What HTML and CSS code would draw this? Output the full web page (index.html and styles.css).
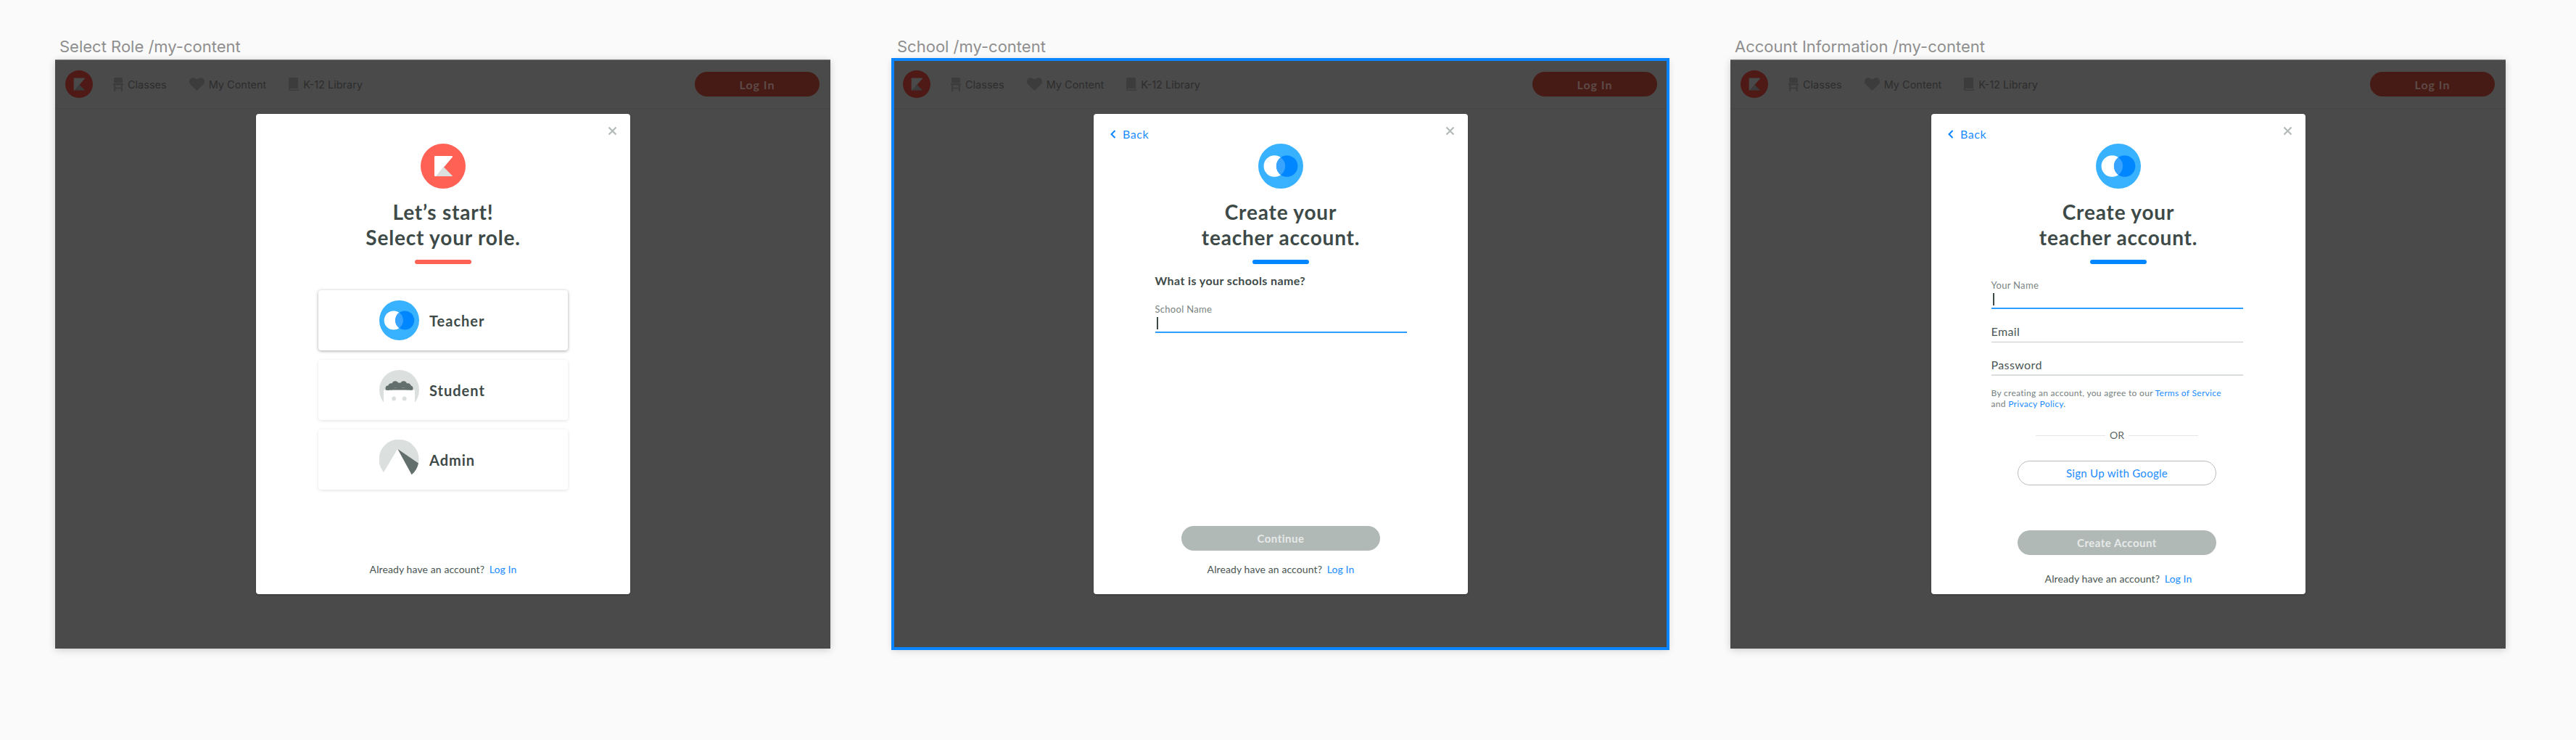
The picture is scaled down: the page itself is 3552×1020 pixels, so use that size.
FILE: index.html
```html
<!DOCTYPE html>
<html lang="en">
<head>
    <meta charset="UTF-8">
    <title>Sign up flow - /my-content</title>
    <link rel="stylesheet" href="styles.css">
</head>
<body>
    <!-- shared icons -->
    <svg class="defs" width="0" height="0">
        <symbol id="logo" viewBox="0 0 62 62">
            <circle cx="31" cy="31" r="31" style="fill: var(--logo-bg)"/>
            <path d="M20 18H43L31.700 31.300L21 44H20Z" style="fill: var(--logo-k); stroke: var(--logo-k)" stroke-width="2" stroke-linejoin="round"/>
            <path d="M22 44.500L31.700 32.500L43.500 44.500Z" style="fill: var(--logo-tri); stroke: var(--logo-tri)" stroke-width="1" stroke-linejoin="round"/>
        </symbol>
        <symbol id="teacher" viewBox="0 0 60 60">
            <circle cx="30" cy="30" r="30" fill="#38b2ff"/>
            <circle cx="21.600" cy="30" r="14.300" fill="#fff"/>
            <circle cx="38.400" cy="30" r="14.200" fill="#0086ff"/>
            <path d="M30 18.400A14.200 14.200 0 0 0 30 41.600A14.300 14.300 0 0 0 30 18.400Z" fill="#38a4ff"/>
        </symbol>
        <symbol id="student" viewBox="0 0 60 60">
            <circle cx="30" cy="30" r="30" fill="#dbdfde"/>
            <rect x="6.600" y="30" width="46.800" height="30" fill="#fff"/>
            <rect x="0" y="50.500" width="60" height="10" fill="#fff"/>
            <circle cx="13" cy="27" r="3.500" fill="#626f6c"/>
            <circle cx="18" cy="25" r="5" fill="#626f6c"/>
            <circle cx="24" cy="21.500" r="5" fill="#626f6c"/>
            <circle cx="36.600" cy="21.500" r="5" fill="#626f6c"/>
            <circle cx="30" cy="24" r="5" fill="#626f6c"/>
            <circle cx="43" cy="25" r="5" fill="#626f6c"/>
            <circle cx="47.300" cy="27" r="3.200" fill="#626f6c"/>
            <rect x="9.500" y="26.500" width="41" height="3.500" fill="#626f6c"/>
            <circle cx="22" cy="43" r="3.200" fill="#dbdfde"/>
            <circle cx="37.800" cy="43" r="3.200" fill="#dbdfde"/>
        </symbol>
        <symbol id="admin" viewBox="0 0 60 60">
            <path d="M27.500 13.900L6.600 49A30 30 0 1 1 58.900 35.500Z" fill="#dbdfde"/>
            <path d="M27.500 13.900L58.900 35.500A30 30 0 0 1 48.700 52.700Z" fill="#626f6c"/>
        </symbol>
        <symbol id="chair" viewBox="0 0 14 19">
            <rect x="1" y="0" width="12" height="7.500" rx="1.500"/>
            <rect x="0" y="8" width="14" height="2.500"/>
            <rect x="1" y="10" width="2.200" height="9"/>
            <rect x="10.800" y="10" width="2.200" height="9"/>
            <rect x="1" y="13.500" width="12" height="1.800"/>
        </symbol>
        <symbol id="heart" viewBox="0 0 21 18">
            <path d="M10.500 18L1.500 9.300C-0.500 7.200 -0.500 3.400 1.700 1.500C3.900 -0.500 7.800 -0.400 10.500 2.800C13.200 -0.400 17.100 -0.500 19.300 1.500C21.500 3.400 21.500 7.200 19.500 9.300Z"/>
        </symbol>
        <symbol id="book" viewBox="0 0 14 18">
            <path d="M1.500 0H13V15H2.500C1.800 15 1.500 15.400 1.500 15.800C1.500 16.300 1.800 16.600 2.500 16.600H13V15.500H14V18H2C0.800 18 0 17.200 0 16V1.500C0 0.600 0.600 0 1.500 0Z"/>
        </symbol>
        <symbol id="cross" viewBox="0 0 13 13">
            <path d="M1.500 1.500L11.500 11.500M11.500 1.500L1.500 11.500"/>
        </symbol>
    </svg>

    <div class="board">
        <!-- Select role -->
        <section class="artboard">
            <div class="artboard-label">Select Role /my-content</div>
            <div class="frame">
                <nav class="topnav">
                    <svg class="nav-logo"><use href="#logo"/></svg>
                    <a class="nav-item"><svg class="nav-icon chair"><use href="#chair"/></svg>Classes</a>
                    <a class="nav-item"><svg class="nav-icon heart"><use href="#heart"/></svg>My Content</a>
                    <a class="nav-item"><svg class="nav-icon book"><use href="#book"/></svg>K-12 Library</a>
                    <button class="nav-login">Log In</button>
                </nav>
                <div class="modal">
                    <svg class="close"><use href="#cross"/></svg>
                    <svg class="modal-logo"><use href="#logo"/></svg>
                    <h2 class="title">Let’s start!<br>Select your role.</h2>
                    <div class="bar bar-red"></div>
                    <div class="roles">
                        <a class="role active"><svg class="role-icon"><use href="#teacher"/></svg>Teacher</a>
                        <a class="role"><svg class="role-icon"><use href="#student"/></svg>Student</a>
                        <a class="role"><svg class="role-icon"><use href="#admin"/></svg>Admin</a>
                    </div>
                    <p class="foot foot-end">Already have an account? <a class="link">Log In</a></p>
                </div>
            </div>
        </section>

        <!-- School -->
        <section class="artboard">
            <div class="artboard-label">School /my-content</div>
            <div class="frame selected">
                <nav class="topnav">
                    <svg class="nav-logo"><use href="#logo"/></svg>
                    <a class="nav-item"><svg class="nav-icon chair"><use href="#chair"/></svg>Classes</a>
                    <a class="nav-item"><svg class="nav-icon heart"><use href="#heart"/></svg>My Content</a>
                    <a class="nav-item"><svg class="nav-icon book"><use href="#book"/></svg>K-12 Library</a>
                    <button class="nav-login">Log In</button>
                </nav>
                <div class="modal">
                    <a class="back"><svg class="back-icon" viewBox="0 0 8 12"><path d="M6.500 1L1.500 6L6.500 11"/></svg>Back</a>
                    <svg class="close"><use href="#cross"/></svg>
                    <svg class="modal-logo"><use href="#teacher"/></svg>
                    <h2 class="title">Create your<br>teacher account.</h2>
                    <div class="bar"></div>
                    <div class="form">
                        <h3 class="question">What is your schools name?</h3>
                        <label class="field focus">
                            <span class="field-label">School Name</span>
                            <span class="caret"></span>
                        </label>
                    </div>
                    <button class="pill pill-disabled">Continue</button>
                    <p class="foot">Already have an account? <a class="link">Log In</a></p>
                </div>
            </div>
        </section>

        <!-- Account information -->
        <section class="artboard">
            <div class="artboard-label">Account Information /my-content</div>
            <div class="frame">
                <nav class="topnav">
                    <svg class="nav-logo"><use href="#logo"/></svg>
                    <a class="nav-item"><svg class="nav-icon chair"><use href="#chair"/></svg>Classes</a>
                    <a class="nav-item"><svg class="nav-icon heart"><use href="#heart"/></svg>My Content</a>
                    <a class="nav-item"><svg class="nav-icon book"><use href="#book"/></svg>K-12 Library</a>
                    <button class="nav-login">Log In</button>
                </nav>
                <div class="modal">
                    <a class="back"><svg class="back-icon" viewBox="0 0 8 12"><path d="M6.500 1L1.500 6L6.500 11"/></svg>Back</a>
                    <svg class="close"><use href="#cross"/></svg>
                    <svg class="modal-logo"><use href="#teacher"/></svg>
                    <h2 class="title">Create your<br>teacher account.</h2>
                    <div class="bar"></div>
                    <div class="form form-account">
                        <label class="field focus">
                            <span class="field-label">Your Name</span>
                            <span class="caret"></span>
                        </label>
                        <div class="field-plain thin">Email</div>
                        <div class="field-plain">Password</div>
                        <p class="terms">By creating an account, you agree to our <a class="link">Terms of Service</a><br>and <a class="link">Privacy Policy</a>.</p>
                        <div class="or"><span>OR</span></div>
                    </div>
                    <button class="pill pill-outline">Sign Up with Google</button>
                    <button class="pill pill-disabled pill-nudge">Create Account</button>
                    <p class="foot foot-tight">Already have an account? <a class="link">Log In</a></p>
                </div>
            </div>
        </section>
    </div>
</body>
</html>
```

FILE: styles.css
```css
* {
    margin: 0;
    padding: 0;
    box-sizing: border-box;
}

body {
    background: #fafafa;
    font-family: 'Lato', 'Open Sans', sans-serif;
    color: #3e4a48;
    height: 1020px;
    overflow: hidden;
}

.defs {
    position: absolute;
}

.board {
    display: flex;
    gap: 86px;
    padding: 46px 0 0 76px;
}

.artboard {
    width: 1069px;
}

.artboard-label {
    font-family: 'Inter', sans-serif;
    font-size: 22px;
    line-height: 36px;
    padding-left: 6px;
    color: #8f8f8f;
}

.frame {
    --logo-bg: #4f1a15;
    --logo-k: #4a4a4a;
    --logo-tri: #3c3c3c;
    position: relative;
    height: 812px;
    background: #4a4a4a;
    border-top: 1px solid #7a7a7a;
    box-shadow: 0 2px 10px rgba(0, 0, 0, 0.18);
}

.frame.selected {
    outline: 4px solid #0a84ff;
    outline-offset: -2px;
}

/* top navigation, dimmed by the modal backdrop */
.topnav {
    display: flex;
    align-items: center;
    height: 67px;
    padding: 0 15px 0 14px;
    border-bottom: 1px solid #454545;
}

.nav-logo {
    width: 38px;
    height: 38px;
    margin-right: 28px;
}

.nav-item {
    display: flex;
    align-items: center;
    gap: 6px;
    margin-right: 31px;
    font-family: 'Inter', sans-serif;
    font-size: 14.500px;
    color: #2d2d2d;
}

.nav-icon {
    fill: #3c3c3c;
}

.chair { width: 14px; height: 19px; }
.heart { width: 21px; height: 18px; }
.book { width: 14px; height: 18px; }

.nav-login {
    width: 172px;
    height: 34px;
    margin-left: auto;
    border: none;
    border-radius: 17px;
    background: #471b15;
    color: #5c4a47;
    font-family: 'Lato', sans-serif;
    font-size: 16px;
    font-weight: 700;
    letter-spacing: 1px;
}

/* modal */
.modal {
    --logo-bg: #ff6155;
    --logo-k: #fff;
    --logo-tri: #dbe0df;
    position: absolute;
    top: 74px;
    left: 277px;
    display: flex;
    flex-direction: column;
    align-items: center;
    width: 516px;
    height: 662px;
    padding-top: 41px;
    background: #fff;
    border-radius: 4px;
    box-shadow: 0 1px 2px rgba(0, 0, 0, 0.3);
}

.close {
    position: absolute;
    top: 17px;
    right: 18px;
    width: 13px;
    height: 13px;
    fill: none;
    stroke: #b2bab8;
    stroke-width: 2.200;
}

.back {
    position: absolute;
    top: 18px;
    left: 23px;
    display: flex;
    align-items: center;
    gap: 9px;
    font-size: 16px;
    line-height: 20px;
    letter-spacing: 0.6px;
    color: #1a8cff;
}

.back-icon {
    width: 8px;
    height: 12px;
    fill: none;
    stroke: #0a84ff;
    stroke-width: 2;
}

.modal-logo {
    width: 62px;
    height: 62px;
    flex: none;
}

.title {
    margin-top: 15px;
    font-size: 28px;
    line-height: 35px;
    font-weight: 700;
    letter-spacing: 0.8px;
    text-align: center;
    color: #3e4a48;
}

.bar {
    flex: none;
    width: 78px;
    height: 6px;
    margin-top: 13px;
    border-radius: 3px;
    background: #0086ff;
}

.bar-red {
    background: #ff6155;
}

/* role picker */
.roles {
    display: flex;
    flex-direction: column;
    gap: 13px;
    width: 344px;
    margin-top: 36px;
}

.role {
    display: flex;
    align-items: center;
    gap: 14px;
    height: 83px;
    padding-left: 84px;
    border-radius: 4px;
    font-size: 20px;
    font-weight: 700;
    letter-spacing: 1px;
    color: #3e4a48;
    box-shadow: 0 1px 4px rgba(0, 0, 0, 0.12);
}

.role.active {
    box-shadow: 0 1px 4px rgba(0, 0, 0, 0.35);
}

.role-icon {
    width: 55px;
    height: 55px;
}

/* forms */
.form {
    width: 347px;
    margin-top: 13px;
}

.question {
    font-size: 16px;
    line-height: 20px;
    font-weight: 700;
    letter-spacing: 0.4px;
    color: #3e4a48;
}

.field {
    display: block;
    margin-top: 21px;
    border-bottom: 2px solid #2d9cff;
}

.field-label {
    display: block;
    font-size: 13px;
    line-height: 16px;
    letter-spacing: 0.3px;
    color: #7a8482;
}

.caret {
    display: block;
    width: 2px;
    height: 17px;
    margin: 3px 0 3px 2px;
    background: #3e4a48;
}

.form-account {
    margin-top: 21px;
    margin-right: 4px;
}

.form-account .field {
    margin-top: 0;
}

.field-plain {
    margin-top: 18px;
    height: 28px;
    font-size: 16px;
    line-height: 26px;
    letter-spacing: 0.4px;
    border-bottom: 2px solid #d9dddc;
    color: #4a5654;
}

.field-plain.thin {
    border-bottom: 1px solid #c8c8c8;
}

.terms {
    margin-top: 16px;
    font-size: 12px;
    line-height: 15px;
    letter-spacing: 0.3px;
    color: #76807e;
}

.or {
    display: flex;
    align-items: center;
    justify-content: center;
    gap: 6px;
    margin-top: 27px;
    font-size: 14px;
    line-height: 18px;
    color: #5c6664;
}

.or::before,
.or::after {
    content: '';
    width: 96px;
    height: 1px;
    background: #e4e6e6;
}

.link {
    color: #1a8cff;
}

/* buttons */
.pill {
    flex: none;
    width: 274px;
    height: 34px;
    border-radius: 17px;
    font-family: 'Lato', sans-serif;
    font-size: 15px;
    letter-spacing: 0.5px;
}

.pill-disabled {
    margin-top: auto;
    border: none;
    background: #b1b9b7;
    color: #e6e9e8;
    font-weight: 700;
}

.pill-outline {
    margin-top: 26px;
    margin-right: 4px;
    background: #fff;
    border: 1px solid #bbb;
    color: #1a8cff;
    letter-spacing: 0.3px;
}

.pill-nudge {
    margin-right: 4px;
}

.foot {
    margin-top: 16px;
    padding-bottom: 24px;
    font-size: 14px;
    line-height: 20px;
    letter-spacing: 0.1px;
    color: #4a5654;
}

.foot .link {
    margin-left: 3px;
}

.foot-end {
    margin-top: auto;
}

.foot-tight {
    margin-top: 23px;
    padding-bottom: 11px;
}
```
